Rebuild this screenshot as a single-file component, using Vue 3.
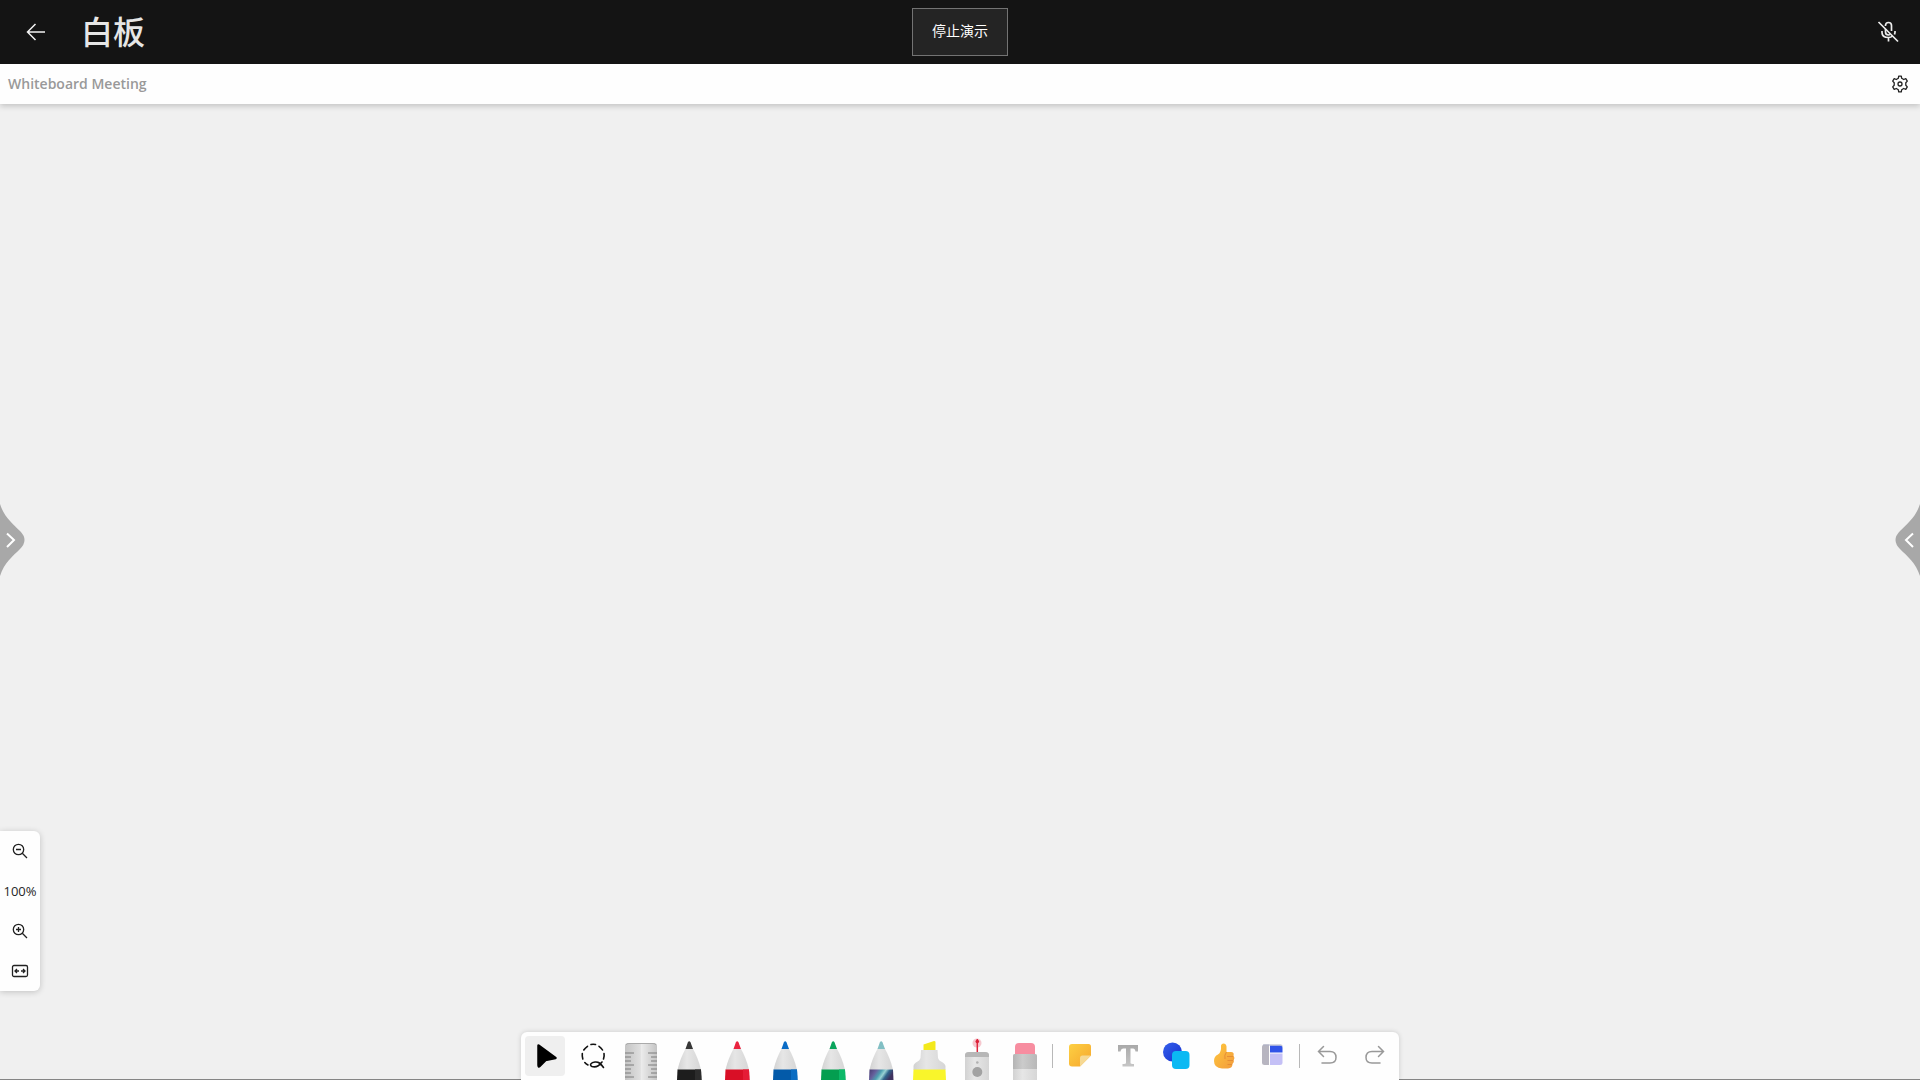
<script setup>
import { ref } from 'vue'

const selected = ref('select')

const pens = [
  { id: 'black', label: '黑色笔', tip: '#383838', band: '#1d1d1d', edge: '#2c2c2c' },
  { id: 'red', label: '红色笔', tip: '#ea2440', band: '#d90f26', edge: '#e51c36' },
  { id: 'blue', label: '蓝色笔', tip: '#0b6cc6', band: '#035aa9', edge: '#0a6cc2' },
  { id: 'green', label: '绿色笔', tip: '#0aa45c', band: '#049e50', edge: '#0cb968' },
  { id: 'galaxy', label: '星系笔', tip: '#82bfc4', band: 'url(#galaxy)', edge: '' },
]

const rulerTicks = [0, 1, 2, 3, 4, 5, 6].map((n) => ({
  y: 21 + n * 4,
  length: n % 3 === 0 ? 9 : 6,
}))
</script>

<template>
  <div class="app">
    <header class="topbar">
      <div class="topbar-side">
        <button class="bare back" aria-label="返回">
          <svg width="24" height="24" viewBox="0 0 24 24" fill="none" stroke="#f2f2f2" stroke-width="1.5">
            <path d="M21 12H3.500M11.500 4L3.500 12L11.500 20" />
          </svg>
        </button>
        <h1>白板</h1>
      </div>
      <button class="stop">停止演示</button>
      <div class="topbar-side end">
        <button class="bare mic" aria-label="取消静音">
          <svg width="24" height="24" viewBox="0 0 24 24" fill="none" stroke="#ededed" stroke-width="1.700">
            <path d="M9.500 6V5.500Q9.500 2.500 12.500 2.500Q15.500 2.500 15.500 5.500V11M9.500 9V12Q9.500 15 12.500 15L14 14.500" />
            <path d="M6 11V12.500Q6 17.500 12.500 17.500Q15 17.500 16.500 16M19 11V12.500L18.500 14.500M12.500 17.500V21.500M2.500 2L22 21.500" />
          </svg>
        </button>
      </div>
    </header>

    <div class="titlebar">
      <h2>Whiteboard Meeting</h2>
      <button class="bare settings" aria-label="设置">
        <svg width="20" height="20" viewBox="0 0 20 20" fill="none" stroke="#222" stroke-width="1.3" stroke-linejoin="round">
          <path d="M8.300 4.300L8.700 2.200H11.300L11.700 4.300L13.700 5.500L15.800 4.700L17.300 7.100L15.800 8.700V11.300L17.300 12.900L15.800 15.300L13.700 14.500L11.700 15.700L11.300 17.800H8.700L8.300 15.700L6.300 14.500L4.200 15.300L2.700 12.900L4.200 11.300V8.700L2.700 7.100L4.200 4.700L6.300 5.500Z" />
          <circle cx="10" cy="10" r="2" />
        </svg>
      </button>
    </div>

    <main class="canvas">
      <button class="bare handle left" aria-label="展开左侧面板">
        <svg width="25" height="76" viewBox="0 0 25 76" fill="none">
          <path d="M0 2C4 15 13 22 20 29Q29 38 20 47C13 54 4 61 0 74Z" fill="#a8a8a8" />
          <path d="M7 31.500L14 38L7 45" stroke="#fff" stroke-width="2" />
        </svg>
      </button>
      <button class="bare handle right" aria-label="展开右侧面板">
        <svg width="25" height="76" viewBox="0 0 25 76" fill="none">
          <path d="M25 2C21 15 12 22 5 29Q-4 38 5 47C12 54 21 61 25 74Z" fill="#a8a8a8" />
          <path d="M18 31.500L11 38L18 45" stroke="#fff" stroke-width="2" />
        </svg>
      </button>

      <div class="zoom" role="group" aria-label="缩放">
        <button class="bare" aria-label="缩小">
          <svg width="20" height="20" viewBox="0 0 20 20" fill="none" stroke="#222" stroke-width="1.300">
            <circle cx="8.500" cy="8.500" r="5.200" /><path d="M12.300 12.300L17 17M6 8.500H11" />
          </svg>
        </button>
        <button class="bare percent">100%</button>
        <button class="bare" aria-label="放大">
          <svg width="20" height="20" viewBox="0 0 20 20" fill="none" stroke="#222" stroke-width="1.300">
            <circle cx="8.500" cy="8.500" r="5.200" /><path d="M12.300 12.300L17 17M6 8.500H11M8.500 6V11" />
          </svg>
        </button>
        <button class="bare" aria-label="适应屏幕">
          <svg width="20" height="20" viewBox="0 0 20 20" fill="none" stroke="#222" stroke-width="1.300">
            <rect x="2.500" y="4.500" width="15" height="11" rx="1.500" />
            <path d="M9 10H5M7 8L5 10L7 12M11 10H15M13 8L15 10L13 12" />
          </svg>
        </button>
      </div>

      <nav class="toolbar" aria-label="绘图工具">
        <button class="tool" :class="{ active: selected === 'select' }" aria-label="选择" @click="selected = 'select'">
          <svg viewBox="0 0 48 48">
            <path d="M17.500 13.500L34.500 26L24.500 28L18.500 34Q17.500 35 17.500 33Z" fill="#000" stroke="#000" stroke-width="2.500" stroke-linejoin="round" />
          </svg>
        </button>
        <button class="tool" :class="{ active: selected === 'lasso' }" aria-label="套索" @click="selected = 'lasso'">
          <svg viewBox="0 0 48 48" fill="none" stroke="#111" stroke-width="1.600" stroke-linecap="round">
            <path d="M22 12.500Q24 12 26.500 12.500M30 14.300Q32.500 16 33.500 18M35 21.500Q35.500 24 34.500 27M18.500 14.300Q16 16 14.800 18M13.300 21.500Q13 24 13.800 27M15.800 30.500Q17 32 19 33" />
            <path d="M33 30C30 34 26 35.500 23 34.500C20 33 22 30.500 26 30C30 29.500 32 32 34.500 35.500" />
          </svg>
        </button>
        <button class="tool" :class="{ active: selected === 'ruler' }" aria-label="标尺" @click="selected = 'ruler'">
          <svg viewBox="0 0 48 48">
            <path d="M8 48V14Q8 11 11 11H37Q40 11 40 14V48Z" fill="url(#ruler)" />
            <path d="M9 13Q9.500 11.500 12 11.500H36Q38.500 11.500 39 13" fill="none" stroke="#aaa" />
            <g stroke="#7d7d7d" stroke-width="1">
              <path v-for="t in rulerTicks" :key="t.y" :d="`M8 ${t.y}h${t.length}M40 ${t.y}h-${t.length}`" />
            </g>
          </svg>
        </button>
        <button
          v-for="pen in pens"
          :key="pen.id"
          class="tool"
          :class="{ active: selected === pen.id }"
          :aria-label="pen.label"
          @click="selected = pen.id"
        >
          <svg viewBox="0 0 48 48">
            <path d="M21 16H27.500C31 22 34 29 36 38H12.500C14.500 29 17.500 22 21 16Z" fill="url(#barrel)" />
            <path d="M20.500 17L22.800 10.500Q24.200 8 25.600 10.500L28 17Z" :fill="pen.tip" />
            <path d="M12.500 37.500H36L36.500 48H12Z" :fill="pen.band" />
            <path v-if="pen.edge" d="M30 37.500H36L36.500 48H30Z" :fill="pen.edge" />
          </svg>
        </button>
        <button class="tool" :class="{ active: selected === 'marker' }" aria-label="荧光笔" @click="selected = 'marker'">
          <svg viewBox="0 0 48 48">
            <path d="M18.500 18V12.500L29 9Q30.500 9 30.500 10V18Z" fill="#f3e91c" />
            <path d="M16 18H32.500L33 26C34 30 40 30 40.500 34V38H8.500V34C9 30 14.500 30 15.500 26Z" fill="url(#barrel)" />
            <path d="M8.500 37.500H40.500L41 48H8Z" fill="#f9f52b" />
          </svg>
        </button>
        <button class="tool" :class="{ active: selected === 'laser' }" aria-label="激光笔" @click="selected = 'laser'">
          <svg viewBox="0 0 48 48">
            <circle cx="24" cy="11" r="4.500" fill="#f4bac3" opacity=".8" />
            <path d="M24.300 7V20" stroke="#df263d" stroke-width="1.500" />
            <circle cx="24.300" cy="9.500" r="1.800" fill="#dc2038" />
            <path d="M12 48V24Q12 20 16 20H32Q36 20 36 24V48Z" fill="url(#barrel)" />
            <path d="M12 25V23Q12 20 16 20H32Q36 20 36 23V25Z" fill="#b7b7b7" />
            <circle cx="24.300" cy="30.500" r="1.300" fill="#b0b0b0" />
            <circle cx="24.300" cy="40" r="5" fill="#a2a2a2" />
          </svg>
        </button>
        <button class="tool" :class="{ active: selected === 'eraser' }" aria-label="橡皮擦" @click="selected = 'eraser'">
          <svg viewBox="0 0 48 48">
            <path d="M14 23V15Q14 11 18 11H30Q34 11 34 15V23Z" fill="#f78da0" />
            <path d="M12 48V24Q12 22 14 22H34Q36 22 36 24V48Z" fill="url(#barrel)" />
            <path d="M12 37V24Q12 22 14 22H34Q36 22 36 24V37Z" fill="url(#sleeve)" />
          </svg>
        </button>

        <span class="divider"></span>

        <button class="tool" aria-label="便笺">
          <svg viewBox="0 0 48 48">
            <path d="M16 12H32.500Q35 12 35 14.500V23.500L24 34.500H16Q13 34.500 13 31.500V15Q13 12 16 12Z" fill="url(#note)" />
            <path d="M24 34.500V26Q24 23.500 26.500 23.500H35Z" fill="#f6d994" />
          </svg>
        </button>
        <button class="tool" aria-label="文本">
          <svg viewBox="0 0 48 48">
            <path d="M14 13H34V19.500H31.500Q31 16.500 29 16.500H26.500V31Q26.500 32 30 32V34.500H18.500V32Q22 32 22 31V16.500H19.500Q17 16.500 16.500 19.500H14Z" fill="url(#letter)" />
          </svg>
        </button>
        <button class="tool" aria-label="形状">
          <svg viewBox="0 0 48 48">
            <circle cx="20.500" cy="20" r="9.500" fill="url(#disc)" />
            <rect x="20" y="19" width="17.500" height="18" rx="4" fill="#0bb9f3" />
          </svg>
        </button>
        <button class="tool" aria-label="反应">
          <svg viewBox="0 0 48 48">
            <path d="M21 13.500Q21.500 11.500 23.500 11.500Q26 11.500 26.500 14.500V20H31Q34.500 20 33.500 23.500Q35 25.500 33.800 28Q34.500 30.500 32.500 32Q32.500 36 28 36.500H22Q14 36 14 29Q14 24 18 22.500Q21.500 20.500 21 13.500Z" fill="url(#thumb)" />
            <path d="M27 24.500H33M27.500 28.500H33M27.500 32.500H32M26.500 20Q24 23 25 27" fill="none" stroke="#e58d35" stroke-width="1" />
          </svg>
        </button>
        <button class="tool" aria-label="模板">
          <svg viewBox="0 0 48 48">
            <path d="M21 12.500V33H16.500Q14 33 14 30.500V15Q14 12.500 16.500 12.500Z" fill="#b7b5c0" />
            <path d="M22 13.500H32Q34.500 13.500 34.500 16V20.500H22Z" fill="#3053e8" />
            <path d="M22 21.500H34.500V31Q34.500 33 32 33H22Z" fill="#c4c0f6" />
            <path d="M15 13H33Q34 13 34.500 14.500" fill="none" stroke="#aeb2c8" />
          </svg>
        </button>

        <span class="divider"></span>

        <button class="tool" aria-label="撤消">
          <svg viewBox="0 0 48 48" fill="none" stroke="#999" stroke-width="1.500" stroke-linecap="round">
            <path d="M20.500 14.500L15.500 19.500L20.500 24.500M15.500 19.500H27Q33 19.500 33 25.500Q33 31 27 31H19" />
          </svg>
        </button>
        <button class="tool" aria-label="恢复">
          <svg viewBox="0 0 48 48" fill="none" stroke="#999" stroke-width="1.500" stroke-linecap="round">
            <path d="M27.500 14.500L32.500 19.500L27.500 24.500M32.500 19.500H21Q15 19.500 15 25.500Q15 31 21 31H29" />
          </svg>
        </button>
      </nav>
    </main>

    <svg class="defs" width="0" height="0" aria-hidden="true">
      <defs>
        <linearGradient id="barrel"><stop offset="0" stop-color="#d2d2d2" /><stop offset=".4" stop-color="#e6e6e6" /><stop offset="1" stop-color="#d6d6d6" /></linearGradient>
        <linearGradient id="sleeve"><stop offset="0" stop-color="#b4b4b4" /><stop offset=".4" stop-color="#cbcbcb" /><stop offset="1" stop-color="#b8b8b8" /></linearGradient>
        <linearGradient id="ruler"><stop offset="0" stop-color="#c4c4c4" /><stop offset=".48" stop-color="#dfdfdf" /><stop offset=".5" stop-color="#ececec" /><stop offset="1" stop-color="#c4c4c4" /></linearGradient>
        <linearGradient id="galaxy" x2="1" y2=".3"><stop offset="0" stop-color="#463a70" /><stop offset=".3" stop-color="#665f9c" /><stop offset=".5" stop-color="#4d9fb0" /><stop offset=".65" stop-color="#99d2d3" /><stop offset=".8" stop-color="#31658c" /><stop offset="1" stop-color="#3f315e" /></linearGradient>
        <linearGradient id="note" y2="1"><stop offset="0" stop-color="#fdd043" /><stop offset="1" stop-color="#f6a62e" /></linearGradient>
        <linearGradient id="letter" x2="0" y2="1"><stop offset="0" stop-color="#a9a9a9" /><stop offset="1" stop-color="#c6c6c6" /></linearGradient>
        <linearGradient id="disc" y2="1"><stop offset="0" stop-color="#3560ec" /><stop offset="1" stop-color="#1632cf" /></linearGradient>
        <linearGradient id="thumb" y2="1"><stop offset="0" stop-color="#ffc83d" /><stop offset="1" stop-color="#f29b3c" /></linearGradient>
      </defs>
    </svg>
  </div>
</template>

<style>
body {
  margin: 0;
}
</style>

<style scoped>
.app {
  display: flex;
  flex-direction: column;
  min-height: 100vh;
  background: #f0f0f0;
  font-family: "Open Sans", "Noto Sans CJK SC", sans-serif;
}
button {
  padding: 0;
  border: 0;
  font-family: inherit;
  cursor: pointer;
}
.bare {
  display: flex;
  align-items: center;
  justify-content: center;
  background: none;
}
svg {
  display: block;
}
.topbar {
  display: flex;
  align-items: center;
  height: 64px;
  background: #141414;
  color: #e6e6e6;
}
.topbar-side {
  display: flex;
  flex: 1;
  align-items: center;
}
.topbar-side.end {
  justify-content: flex-end;
}
.back {
  width: 72px;
  height: 64px;
}
h1 {
  margin: 0 0 0 9px;
  padding-bottom: 4px;
  font: 500 32px/48px "Noto Sans CJK SC", sans-serif;
}
.stop {
  width: 96px;
  height: 48px;
  padding-bottom: 4px;
  border: 1px solid #737373;
  background: #242424;
  color: #fff;
  font: 14px/20px "Noto Sans CJK SC", sans-serif;
}
.mic {
  width: 64px;
  height: 64px;
}
.titlebar {
  display: flex;
  position: relative;
  align-items: center;
  justify-content: space-between;
  height: 40px;
  padding-left: 8px;
  background: #fefefe;
  box-shadow: 0 2px 6px rgba(0, 0, 0, 0.2);
}
h2 {
  margin: 0;
  color: #999;
  font-size: 14px;
  font-weight: 600;
  line-height: 20px;
}
.settings {
  width: 40px;
  height: 40px;
}
.canvas {
  display: flex;
  position: relative;
  flex: 1;
  flex-direction: column;
  align-items: center;
  justify-content: flex-end;
  border-bottom: 1px solid #858585;
}
.handle {
  position: absolute;
  bottom: 501px;
}
.left {
  left: 0;
}
.right {
  right: 0;
}
.zoom {
  position: absolute;
  bottom: 88px;
  left: 0;
  width: 40px;
  border-radius: 0 6px 6px 0;
  background: #fefefe;
  box-shadow: 0 1px 6px rgba(0, 0, 0, 0.2);
}
.zoom button {
  width: 40px;
  height: 40px;
  color: #262626;
}
.zoom .percent {
  font-size: 13px;
}
.toolbar {
  display: flex;
  position: relative;
  align-items: center;
  margin-bottom: -1px;
  border-radius: 6px 6px 0 0;
  background: #fefefe;
  box-shadow: 0 0 5px rgba(0, 0, 0, 0.16);
}
.tool {
  width: 48px;
  height: 48px;
  border: 4px solid transparent;
  border-radius: 8px;
  background: transparent;
  background-clip: padding-box;
}
.tool.active {
  background-color: #efefef;
}
.tool svg {
  width: 48px;
  height: 48px;
  margin: -4px;
}
.divider {
  width: 1px;
  height: 24px;
  margin: 0 3px;
  background: #b8b8b8;
}
.defs {
  position: absolute;
}
</style>
